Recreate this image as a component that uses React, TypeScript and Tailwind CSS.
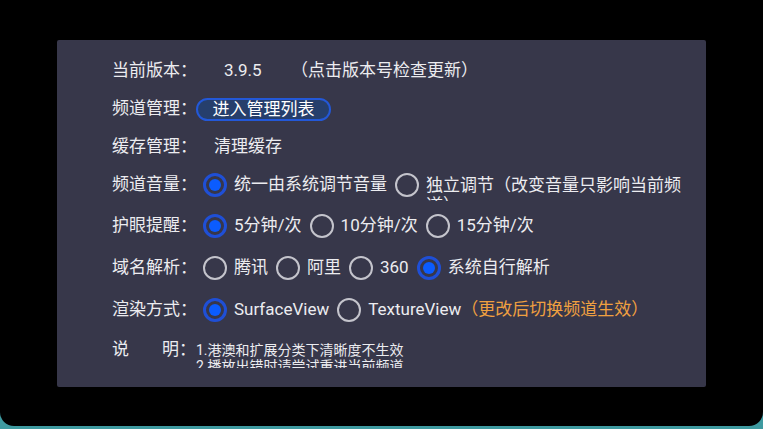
import React from "react";

const font = { fontFamily: "Roboto, 'Noto Sans CJK SC', sans-serif" };

function Radio({ on }: { on?: boolean }) {
  if (on) {
    return (
      <span className="flex h-[24px] w-[24px] shrink-0 items-center justify-center rounded-full border-[3px] border-[#1f4fd6]">
        <span className="h-[12px] w-[12px] rounded-full bg-[#0b5cff]" />
      </span>
    );
  }
  return <span className="block h-[24px] w-[24px] shrink-0 rounded-full border-2 border-[#c4c4cc]" />;
}

function Option({ on, label, last }: { on?: boolean; label: string; last?: boolean }) {
  return (
    <span className={`flex items-center ${last ? "" : "mr-[8px]"}`}>
      <Radio on={on} />
      <span className="ml-[7px] whitespace-nowrap">{label}</span>
    </span>
  );
}

function Row({ label, h, children }: { label: string; h: string; children: React.ReactNode }) {
  return (
    <div className={`flex items-center ${h}`}>
      <span className="w-[84px] shrink-0 whitespace-nowrap">{label}</span>
      {children}
    </div>
  );
}

export default function App() {
  return (
    <div className="h-[429px] w-[763px] overflow-hidden bg-[#3e9aa0]" style={font}>
      <div className="h-[426px] w-full rounded-b-[14px] bg-black pt-[40px] pl-[57px]">
        <div className="h-[347px] w-[649px] rounded-[2px] bg-[#37374a] pt-[12px] pl-[55px] text-[17px] text-[#ececf0]">
          <Row label="当前版本：" h="h-[38px]">
            <span className="ml-[28px] inline-block w-[67px]">3.9.5</span>
            <span>（点击版本号检查更新）</span>
          </Row>
          <Row label="频道管理：" h="h-[38px]">
            <span className="flex h-[23px] w-[135px] items-center justify-center rounded-full border-2 border-[#2358d8] bg-[#263f6c] leading-none text-white">
              进入管理列表
            </span>
          </Row>
          <Row label="缓存管理：" h="h-[37px]">
            <span className="ml-[18px]">清理缓存</span>
          </Row>
          <Row label="频道音量：" h="h-[40px]">
            <span className="ml-[7px] flex items-center">
              <Option on label="统一由系统调节音量" />
              <span className="flex items-center">
                <Radio />
                <span className="ml-[7px] mt-[6px] h-[26px] w-[262px] overflow-hidden leading-[20px]">
                  独立调节（改变音量只影响当前频道）
                </span>
              </span>
            </span>
          </Row>
          <Row label="护眼提醒：" h="h-[42px]">
            <span className="ml-[7px] flex items-center">
              <Option on label="5分钟/次" />
              <Option label="10分钟/次" />
              <Option label="15分钟/次" last />
            </span>
          </Row>
          <Row label="域名解析：" h="h-[42px]">
            <span className="ml-[7px] flex items-center">
              <Option label="腾讯" />
              <Option label="阿里" />
              <Option label="360" />
              <Option on label="系统自行解析" last />
            </span>
          </Row>
          <Row label="渲染方式：" h="h-[42px]">
            <span className="ml-[7px] flex items-center">
              <Option on label="SurfaceView" />
              <Option label="TextureView" last />
              <span className="whitespace-nowrap text-[#f0a040]">（更改后切换频道生效）</span>
            </span>
          </Row>
          <div className="mt-[8px] flex items-start">
            <span className="flex w-[84px] shrink-0 justify-between leading-[20px]">
              <span>说</span>
              <span>明：</span>
            </span>
            <div className="mt-[3px] h-[26px] overflow-hidden text-[14px] leading-[16px]">
              <div>1.港澳和扩展分类下清晰度不生效</div>
              <div>2.播放出错时请尝试重进当前频道</div>
            </div>
          </div>
        </div>
      </div>
    </div>
  );
}
